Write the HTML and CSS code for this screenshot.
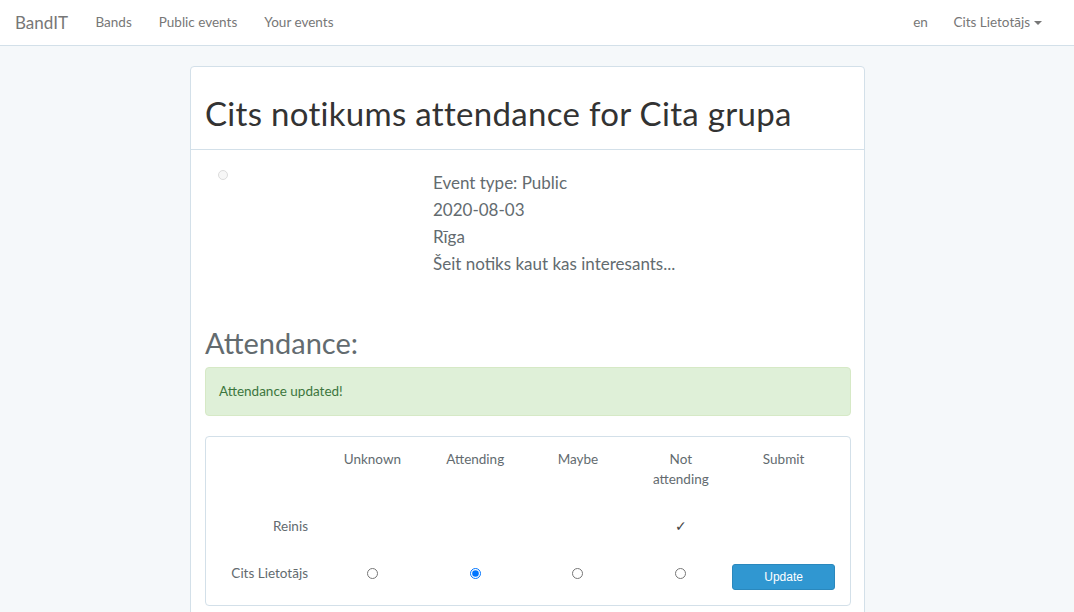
FILE: index.html
```html
<!DOCTYPE html>
<html lang="lv">
<head>
<meta charset="utf-8">
<title>BandIT</title>
<link rel="stylesheet" href="styles.css">
</head>
<body>
<nav class="navbar">
  <div class="nav-left">
    <a class="brand" href="#">BandIT</a>
    <ul class="nav-links">
      <li><a href="#">Bands</a></li>
      <li><a href="#">Public events</a></li>
      <li><a href="#">Your events</a></li>
    </ul>
  </div>
  <ul class="nav-links nav-right">
    <li><a href="#">en</a></li>
    <li><a href="#">Cits Lietotājs <span class="caret"></span></a></li>
  </ul>
</nav>
<main class="page">
  <section class="panel">
    <header class="panel-heading">
      <h1>Cits notikums attendance for Cita grupa</h1>
    </header>
    <div class="panel-body">
      <div class="event">
        <div class="event-image"><span class="broken-img"></span></div>
        <div class="event-info">
          <p>Event type: Public</p>
          <p>2020-08-03</p>
          <p>Rīga</p>
          <p>Šeit notiks kaut kas interesants...</p>
        </div>
      </div>
      <h2>Attendance:</h2>
      <div class="alert">Attendance updated!</div>
      <div class="table-panel">
        <form class="att-grid">
          <div class="cell head"></div>
          <div class="cell head">Unknown</div>
          <div class="cell head">Attending</div>
          <div class="cell head">Maybe</div>
          <div class="cell head">Not<br>attending</div>
          <div class="cell head">Submit</div>

          <div class="cell name row-a">Reinis</div>
          <div class="cell row-a"></div>
          <div class="cell row-a"></div>
          <div class="cell row-a"></div>
          <div class="cell row-a check">✓</div>
          <div class="cell row-a"></div>

          <div class="cell name row-b">Cits Lietotājs</div>
          <div class="cell row-b"><input type="radio" name="status" value="unknown"></div>
          <div class="cell row-b"><input type="radio" name="status" value="attending" checked></div>
          <div class="cell row-b"><input type="radio" name="status" value="maybe"></div>
          <div class="cell row-b"><input type="radio" name="status" value="not"></div>
          <div class="cell row-b btn-cell"><button type="button" class="btn">Update</button></div>
        </form>
      </div>
    </div>
  </section>
</main>
</body>
</html>
```

FILE: styles.css
```css
* { box-sizing: border-box; }

html, body {
  margin: 0;
  padding: 0;
}

body {
  background: #f5f8fa;
  color: #636b6f;
  font-family: Lato, "Open Sans", sans-serif;
  font-size: 14px;
  line-height: 1.6;
  overflow: hidden;
}

a { text-decoration: none; color: inherit; }

/* Navbar */
.navbar {
  height: 46px;
  background: #fff;
  border-bottom: 1px solid #d3e0e9;
  display: flex;
  justify-content: space-between;
  align-items: center;
  padding: 0 19px 0 15px;
}

.nav-left {
  display: flex;
  align-items: center;
}

.brand {
  font-size: 17px;
  color: #777;
  padding-right: 14px;
}

.nav-links {
  list-style: none;
  margin: 0;
  padding: 0;
  display: flex;
}

.nav-links a {
  display: block;
  padding: 0 13.5px;
  color: #777;
  font-size: 13.5px;
}

.nav-right li:last-child a {
  padding-left: 12px;
}

.caret {
  display: inline-block;
  width: 0;
  height: 0;
  margin-left: 0;
  vertical-align: middle;
  border-top: 4px solid #777;
  border-left: 4px solid transparent;
  border-right: 4px solid transparent;
}

/* Page */
.page {
  padding: 20px 0 0 190px;
}

.panel {
  width: 675px;
  background: #fff;
  border: 1px solid #d3e0e9;
  border-radius: 4px;
  min-height: 600px;
}

.panel-heading {
  padding: 10px 14px;
  border-bottom: 1px solid #d3e0e9;
}

.panel-heading h1 {
  margin: 16px 0 6px;
  font-size: 33px;
  line-height: 40px;
  font-weight: 400;
  letter-spacing: 0.3px;
  color: #333;
}

.panel-body {
  padding: 15px 13px 15px 14px;
}

.event {
  display: flex;
  margin-top: 4px;
}

.event-image {
  width: 228px;
  padding: 1px 0 0 13px;
}

.broken-img {
  display: block;
  width: 10px;
  height: 10px;
  border-radius: 50%;
  border: 1px solid #dcdcdc;
  background: #f7f7f7;
}

.event-info p {
  margin: 0;
  font-size: 17px;
  line-height: 27px;
}

.panel-body h2 {
  margin: 49px 0 8px;
  font-size: 29px;
  line-height: 33px;
  font-weight: 400;
  color: #636b6f;
}

.alert {
  background: #dff0d8;
  border: 1px solid #d6e9c6;
  border-radius: 4px;
  color: #3c763d;
  padding: 15px 13px;
  line-height: 17px;
  font-size: 13.5px;
  margin-bottom: 20px;
}

.table-panel {
  border: 1px solid #d3e0e9;
  border-radius: 4px;
  padding: 12px 15px 15px;
}

.att-grid {
  display: grid;
  grid-template-columns: 100px repeat(5, 1fr);
  grid-template-rows: 59px 36px 46px;
  margin: 0;
}

.cell {
  text-align: center;
  font-size: 13.5px;
  line-height: 20px;
}

.row-a, .row-b {
  display: flex;
  align-items: center;
  justify-content: center;
}

.row-b { margin-top: 12px; }

.name {
  justify-content: flex-end;
  padding-right: 13px;
}

.check {
  font-family: "DejaVu Sans", sans-serif;
  color: #444;
  font-size: 14px;
}

.row-b input[type="radio"] {
  margin: 0;
  width: 11px;
  height: 11px;
}

.btn-cell {
  align-items: flex-end;
}

.btn {
  width: 100%;
  height: 26px;
  background: #3097d1;
  border: 1px solid #2a88bd;
  border-radius: 3px;
  color: #fff;
  font-family: "Liberation Sans", Arial, sans-serif;
  font-size: 12px;
  padding: 0;
}
```
